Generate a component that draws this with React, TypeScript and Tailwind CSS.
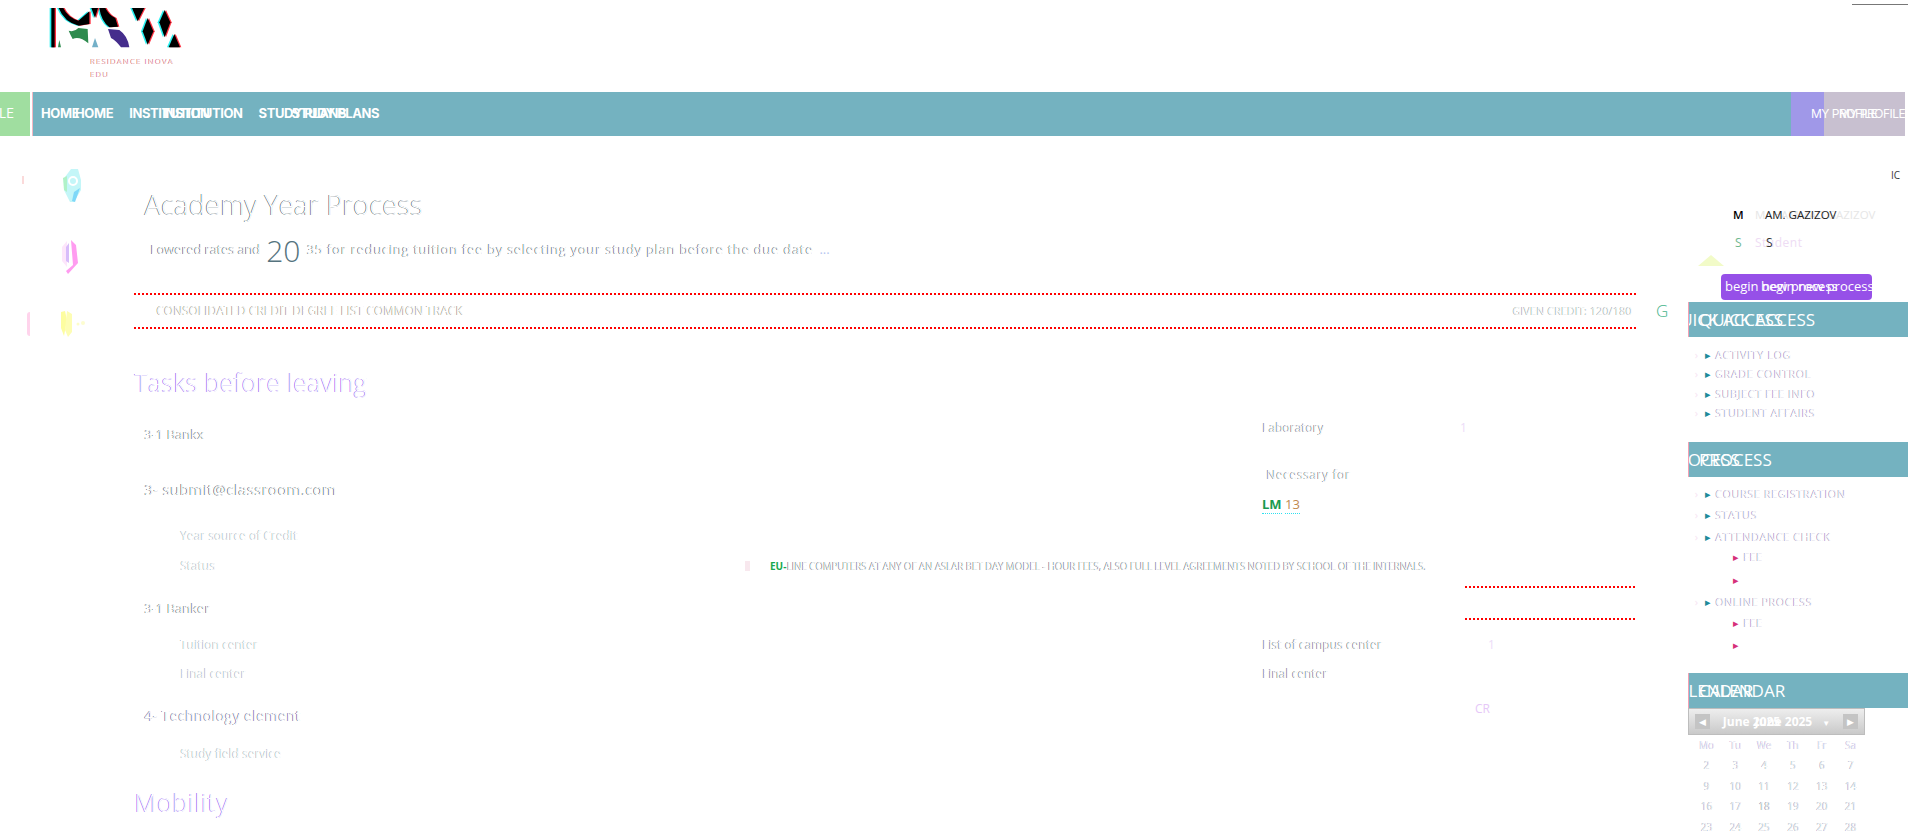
import type { ReactNode } from "react";

const BODY = "font-['Open_Sans',sans-serif]";
const NAV = "font-['Inter',sans-serif]";

// a dark copy with white copies nudged over it, only slivers of the glyphs stay visible
function Frag({ children, tone = "text-[#4c6670]", className = "" }: { children: ReactNode; tone?: string; className?: string }) {
  return (
    <span className={`inline-grid whitespace-nowrap ${className}`}>
      <span className={`col-start-1 row-start-1 ${tone}`}>{children}</span>
      <span aria-hidden className="col-start-1 row-start-1 ml-[0.5px] text-white">
        {children}
      </span>
    </span>
  );
}

// the same label twice, the second one overlapping the first
function Twice({ text, first = "", second = "" }: { text: string; first?: string; second?: string }) {
  return (
    <span className="inline-grid whitespace-nowrap">
      <span className={`col-start-1 row-start-1 ${first}`}>{text}</span>
      <span aria-hidden className={`col-start-1 row-start-1 ${second}`}>
        {text}
      </span>
    </span>
  );
}

function Dotted() {
  return <div className="h-[2px] w-full bg-[repeating-linear-gradient(90deg,#ff0000_0_2px,transparent_2px_4px)]" />;
}

function Logo() {
  const dark = [
    "M38 12 L52 12 Q65 40 97 50 L130 22 L130 60 L98 65 Q55 55 38 12Z",
    "M136 12 L156 12 L147 42Z",
    "M160 12 L178 12 Q190 35 208 42 L216 68 L190 70 Q165 50 160 12Z",
    "M258 12 L295 12 L275 52Z",
    "M305 42 L322 82 L305 122 L290 82Z",
    "M356 18 L373 55 L356 100 L340 55Z",
    "M385 90 L402 130 L368 130Z",
    "M16 12 H26 V130 H16Z",
  ];
  return (
    <svg width="140" height="44" viewBox="0 0 420 132">
      {dark.map((d) => (
        <path key={d + "c"} d={d} fill="#27f0f0" transform="translate(-5 0)" />
      ))}
      {dark.map((d) => (
        <path key={d + "r"} d={d} fill="#ff3040" transform="translate(4 0)" />
      ))}
      {dark.map((d) => (
        <path key={d} d={d} fill="#000" />
      ))}
      <path d="M68 80 Q85 85 97 72 L125 75 L127 118 Q100 95 80 105 Q72 90 68 80Z" fill="#2e8b4e" />
      <path d="M36 130 L40 108 L45 130Z" fill="#2e8b4e" />
      <path d="M138 130 L147 102 L157 130Z" fill="#74b0c8" />
      <path d="M186 75 L220 78 Q245 95 250 130 L225 130 Q210 110 195 102Z" fill="#452d8c" />
    </svg>
  );
}

function Rail() {
  return (
    <div className="flex w-[134px] shrink-0 flex-col">
      <div className="mt-[32px] flex items-start pl-[22px]">
        <div className="mt-[8px] h-[8px] w-[2px] bg-[#fbdada]" />
        <svg className="ml-[38px]" width="20" height="36" viewBox="0 0 20 36">
          <path d="M3 9 L9 1 L16 1 L19 12 L19 22 L12 34 L8 34 L2 22Z" fill="#c4f6f8" />
          <path d="M1 10 L5 8 L5 24 L2 22Z" fill="#b0f2c8" />
          <path d="M10 33 L12 24 L18 20 L13 34Z" fill="#7fd8f8" />
          <circle cx="11" cy="13" r="4" fill="none" stroke="#fff" strokeWidth="2" />
        </svg>
      </div>
      <div className="mt-[35px] flex pl-[60px]">
        <svg width="20" height="36" viewBox="0 0 20 36">
          <path d="M2 8 L7 2 L7 28 L2 22Z" fill="#fde6fb" />
          <path d="M6 8 L9 4 L9 24 L6 22Z" fill="#d8bcfa" />
          <path d="M11 1 L16 6 L18 24 L8 35 L6 32 L13 26Z" fill="#ff9cf0" />
        </svg>
      </div>
      <div className="mt-[35px] flex items-start pl-[27px]">
        <div className="mt-[2px] h-[24px] w-[3px] rounded-l-full bg-[#ffd4ec]" />
        <svg className="ml-[30px]" width="26" height="28" viewBox="0 0 26 28">
          <path d="M1 2 L5 1 L7 10 L4 26 L1 18Z" fill="#fdfda0" />
          <path d="M7 1 L12 4 L12 22 L8 27 L5 20Z" fill="#fdfdb4" />
          <circle cx="18" cy="14" r="1.5" fill="#fdfdc8" />
          <circle cx="23" cy="13" r="2" fill="#fdfdd0" />
        </svg>
      </div>
    </div>
  );
}

function Sub({ children, tone = "text-[#8aa0a8]" }: { children: ReactNode; tone?: string }) {
  return (
    <div className="pl-[46px] text-[12px]">
      <Frag tone={tone}>{children}</Frag>
    </div>
  );
}

function Content() {
  return (
    <div className={`flex w-[1554px] shrink-0 flex-col text-[14px] ${BODY}`}>
      <div className="mt-[49px] flex h-[40px] items-center pl-[10px] text-[27.5px] font-light">
        <Frag tone="text-[#1a3a46]">Academy Year Process</Frag>
      </div>
      <div className="mt-[7px] flex h-[36px] items-center gap-[6px] pl-[16px] text-[13px]">
        <Frag tone="text-[#183440]" className="tracking-[-0.2px]">
          Lowered rates and
        </Frag>
        <span className="text-[30px] font-light text-[#55737e]">20</span>
        <Frag tone="text-[#183440]" className="tracking-[0.7px]">
          35 for reducing tuition fee by selecting your study plan before the due date
        </Frag>
        <span className="text-[#b6c6f0]">...</span>
      </div>

      <div className="mt-[25px] flex items-center">
        <div className="flex h-[36px] w-[1502px] flex-col justify-between">
          <Dotted />
          <div className="flex items-center justify-between pl-[22px] pr-[4px]">
            <Frag tone="text-[#7a7660]" className="text-[12px]">
              CONSOLIDATED CREDIT DEGREE LIST COMMON TRACK
            </Frag>
            <Frag tone="text-[#7a8a8a]" className="text-[11px]">
              GIVEN CREDIT: 120/180
            </Frag>
          </div>
          <Dotted />
        </div>
        <span className="ml-[20px] text-[17px] font-light text-[#47b48c]">G</span>
      </div>

      <div className="mt-[38px] flex h-[32px] items-center text-[25px] font-light">
        <Frag tone="text-[#7a3cf0]" className="tracking-[0.3px]">
          Tasks before leaving
        </Frag>
      </div>

      <div className="mt-[25px] flex h-[20px] items-center">
        <div className="w-[1128px] pl-[10px]">
          <Frag tone="text-[#2e3c44]" className="text-[13px]">
            3-1 Bankx
          </Frag>
        </div>
        <div className="mb-[12px] text-[12px]">
          <Frag tone="text-[#3e4e58]">Laboratory</Frag>
        </div>
        <div className="mb-[12px] ml-[136px] text-[12px] text-[#ecdcf8]">1</div>
      </div>

      <div className="mt-[21px] flex h-[49px] items-center">
        <div className="w-[1128px] pl-[10px] text-[15px]">
          <Frag tone="text-[#22323a]" className="tracking-[0.3px]">
            3- submit@classroom.com
          </Frag>
        </div>
        <div className="flex h-full flex-col justify-between text-[12px]">
          <Frag tone="text-[#3e4e58]" className="ml-[4px] h-[20px] leading-[20px] tracking-[0.6px]">
            Necessary for
          </Frag>
          <span className="h-[20px] text-[13px] font-bold leading-[20px]">
            <span className="border-b border-dotted border-[#30e0f0] text-[#1a9a50]">LM</span>{" "}
            <span className="border-b border-dotted border-[#30e0f0] font-normal text-[#c08a50]">13</span>
          </span>
        </div>
      </div>

      <div className="mt-[12px] flex h-[20px] items-center">
        <Sub>Year source of Credit</Sub>
      </div>

      <div className="mt-[10px] flex h-[20px] items-center">
        <div className="w-[611px]">
          <Sub>Status</Sub>
        </div>
        <div className="mr-[20px] h-[10px] w-[5px] bg-[#f8e8ee]" />
        <div className="text-[10px]">
          <span className="font-bold text-[#18a850]">EU-</span>
          <Frag tone="text-[#3e4e58]" className="tracking-[-0.2px]">
            LINE COMPUTERS AT ANY OF AN ASLAR BET DAY MODEL - HOUR FEES, ALSO FULL LEVEL AGREEMENTS NOTED BY SCHOOL OF THE INTERNALS.
          </Frag>
        </div>
      </div>

      <div className="mt-[10px] flex h-[34px] items-stretch">
        <div className="w-[1331px] self-end pb-[2px] pl-[10px]">
          <Frag tone="text-[#2e3c44]" className="text-[13px]">
            3-1 Banker
          </Frag>
        </div>
        <div className="flex w-[171px] flex-col justify-between">
          <Dotted />
          <Dotted />
        </div>
      </div>

      <div className="mt-[15px] flex h-[20px] items-center">
        <div className="w-[1128px]">
          <Sub>Tuition center</Sub>
        </div>
        <div className="text-[12px]">
          <Frag tone="text-[#3e4e58]">List of campus center</Frag>
        </div>
        <div className="ml-[106px] text-[12px] text-[#ecdcf8]">1</div>
      </div>

      <div className="mt-[9px] flex h-[20px] items-center">
        <div className="w-[1128px]">
          <Sub>Final center</Sub>
        </div>
        <div className="text-[12px]">
          <Frag tone="text-[#3e4e58]">Final center</Frag>
        </div>
      </div>

      <div className="mt-[21px] flex h-[20px] items-center">
        <div className="w-[1341px] pl-[10px] text-[14px]">
          <Frag tone="text-[#3a3a70]" className="tracking-[0.4px]">
            4- Technology element
          </Frag>
        </div>
        <div className="mb-[12px] text-[12px] text-[#e6c8f8]">CR</div>
      </div>

      <div className="mt-[19px] flex h-[20px] items-center">
        <Sub>Study field service</Sub>
      </div>

      <div className="mt-[23px] flex h-[32px] items-center text-[25px] font-light">
        <Frag tone="text-[#7a3cf0]" className="tracking-[0.8px]">
          Mobility
        </Frag>
      </div>
    </div>
  );
}

function Bar({ text }: { text: string }) {
  return (
    <div className="flex h-[35px] items-center overflow-hidden border-l border-[#f4a0b4] bg-[#74b2c0] pl-[10px] text-[17px] text-white">
      <Twice text={text} first="-ml-[32px]" second="ml-0" />
    </div>
  );
}

function SideItem({ label, h = "h-[19.5px]", sub = false }: { label: string; h?: string; sub?: boolean }) {
  return (
    <div className={`flex items-center text-[11px] ${h}`}>
      <span className="w-[17px] text-center text-[#f6e4f2]">{sub ? "" : "›"}</span>
      <span className={sub ? "ml-[28px] text-[#d6307a]" : "text-[#208a9a]"}>▸</span>
      <Frag tone="text-[#8070a8]" className="ml-[4px] tracking-[0.5px]">
        {label}
      </Frag>
    </div>
  );
}

function Calendar() {
  const days = ["Mo", "Tu", "We", "Th", "Fr", "Sa"];
  const weeks = [2, 9, 16, 23];
  return (
    <div className="w-[177px]">
      <div className="flex h-[27px] items-center justify-between border border-[#bdbdbd] bg-[linear-gradient(#eeeeee,#c9c9c9)] px-[6px]">
        <span className="flex h-[15px] w-[15px] items-center justify-center bg-[#c4c4c4] text-[9px] text-white">◀</span>
        <span className="text-[12px] font-bold text-white">
          <Twice text="June 2025" second="ml-[32px]" />
          <span className="ml-[10px] text-[8px]">▼</span>
        </span>
        <span className="flex h-[15px] w-[15px] items-center justify-center bg-[#c4c4c4] text-[9px] text-white">▶</span>
      </div>
      <div className="grid grid-cols-6 pl-[4px] text-center text-[10px]">
        {days.map((d) => (
          <div key={d} className="flex h-[20.5px] items-center justify-center">
            <Frag tone="text-[#8070b8]">{d}</Frag>
          </div>
        ))}
        {weeks.flatMap((start) =>
          days.map((_, i) => (
            <div key={start + i} className="flex h-[20.5px] items-center justify-center">
              <Frag tone={start + i === 18 ? "text-[#20304a]" : "text-[#5a6a88]"}>{start + i}</Frag>
            </div>
          )),
        )}
      </div>
    </div>
  );
}

function Sidebar() {
  return (
    <div className={`flex w-[220px] shrink-0 flex-col ${BODY}`}>
      <div className="mr-[8px] mt-[32px] h-[14px] self-end text-[10px] leading-[14px] text-[#3a3a3a]">IC</div>
      <div className="mt-[23px] flex h-[20px] items-center pl-[45px] text-[11.5px]">
        <span className="w-[22px] font-semibold text-black">M</span>
        <span className="inline-grid whitespace-nowrap">
          <span className="col-start-1 row-start-1 text-[#e6e6e6]">MAHAMMAD GAZIZOV</span>
          <span className="col-start-1 row-start-1 ml-[10px] text-[#222]">AM. GAZIZOV</span>
        </span>
      </div>
      <div className="mt-[8px] flex h-[20px] items-center pl-[47px] text-[12px]">
        <span className="w-[20px] text-[#70b890]">S</span>
        <span className="inline-grid whitespace-nowrap">
          <span className="col-start-1 row-start-1 tracking-[0.5px] text-[#eedcf4]">Student</span>
          <span className="col-start-1 row-start-1 ml-[11px] text-[#333]">S</span>
        </span>
      </div>
      <svg className="ml-[10px] mt-[2px]" width="26" height="11" viewBox="0 0 26 11">
        <path d="M0 11 L13 0 L26 11Z" fill="#f2fbc8" />
      </svg>
      <div className="ml-[33px] mt-[8px] flex h-[26px] w-[151px] items-center rounded-[4px] bg-[#9650e8] pl-[4px] text-[13px] text-white">
        <Twice text="begin new process" second="ml-[36px]" />
      </div>
      <div className="mt-[2px]">
        <Bar text="QUICK ACCESS" />
      </div>
      <div className="mt-[8px] flex flex-col">
        <SideItem label="ACTIVITY LOG" />
        <SideItem label="GRADE CONTROL" />
        <SideItem label="SUBJECT FEE INFO" />
        <SideItem label="STUDENT AFFAIRS" />
      </div>
      <div className="mt-[19px]">
        <Bar text="PROCESS" />
      </div>
      <div className="mt-[8px] flex flex-col">
        <SideItem h="h-[18px]" label="COURSE REGISTRATION" />
        <SideItem h="h-[24px]" label="STATUS" />
        <SideItem h="h-[20px]" label="ATTENDANCE CHECK" />
        <SideItem h="h-[21px]" label="FEE" sub />
        <SideItem h="h-[24px]" label="" sub />
        <SideItem h="h-[20px]" label="ONLINE PROCESS" />
        <SideItem h="h-[23px]" label="FEE" sub />
        <SideItem h="h-[20px]" label="" sub />
      </div>
      <div className="mt-[18px]">
        <Bar text="CALENDAR" />
      </div>
      <Calendar />
    </div>
  );
}

export default function App() {
  return (
    <div className="flex h-[834px] w-[1908px] flex-col overflow-hidden bg-white">
      <header className="flex h-[92px] shrink-0">
        <div className="pl-[46px] pt-[4px]">
          <Logo />
          <div className={`ml-[44px] mt-[6px] text-[8px] leading-[13px] tracking-[1px] ${BODY}`}>
            <div>
              <Frag tone="text-[#c02030]">RESIDANCE INOVA</Frag>
            </div>
            <div>
              <Frag tone="text-[#c02030]">EDU</Frag>
            </div>
          </div>
        </div>
        <div className="ml-auto mt-[4px] h-px w-[56px] bg-[#777]" />
      </header>

      <nav className={`flex h-[44px] shrink-0 text-[13px] text-white ${NAV}`}>
        <div className="flex w-[30px] items-center overflow-hidden bg-[#a0dea0]">
          <span className="-ml-[1px]">LE</span>
        </div>
        <div className="w-[3px] border-r border-[#f4b8c4]" />
        <div className="flex flex-1 items-center gap-[16px] bg-[#74b2c0] pl-[8px] font-bold tracking-[-0.4px]">
          <Twice text="HOME" second="ml-[34px]" />
          <Twice text="INSTITUTION" second="ml-[33px]" />
          <Twice text="STUDY PLANS" second="ml-[33px]" />
        </div>
        <div className="flex w-[114px] items-center overflow-hidden bg-[linear-gradient(90deg,#a098e8_33px,#c8c0d0_33px)] pl-[20px] text-[12px] tracking-[-0.5px]">
          <Twice text="MY PROFILE" second="ml-[28px]" />
        </div>
        <div className="w-[3px]" />
      </nav>

      <main className="flex flex-1">
        <Rail />
        <Content />
        <Sidebar />
      </main>
    </div>
  );
}
